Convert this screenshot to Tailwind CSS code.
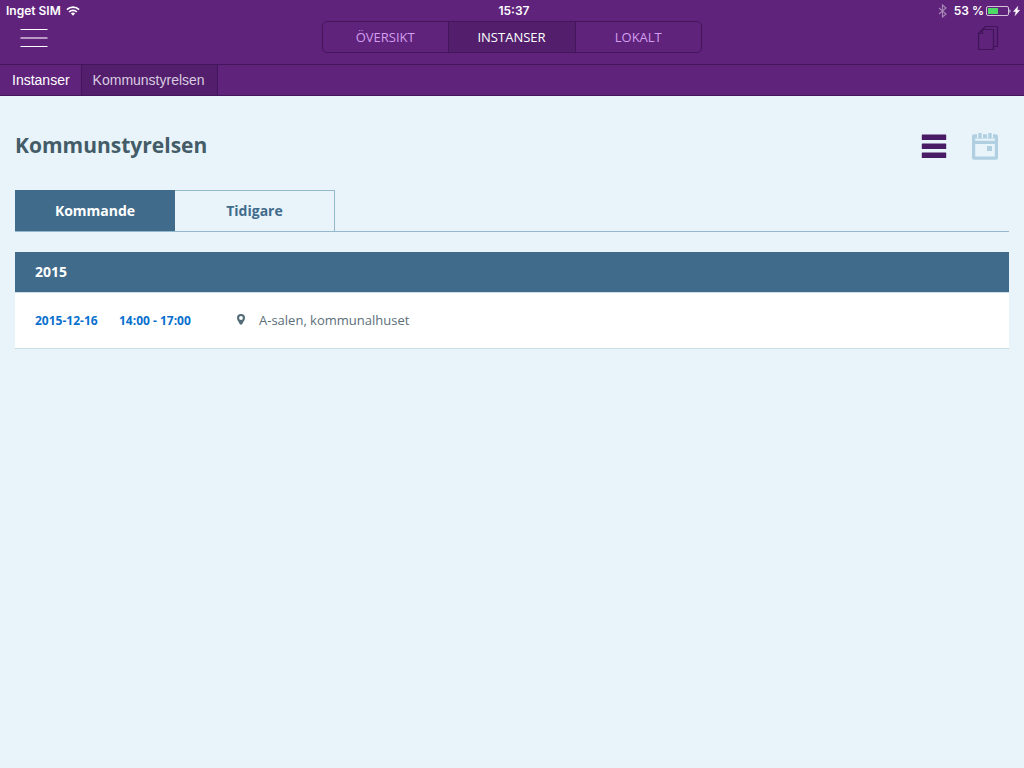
<!DOCTYPE html>
<html lang="sv">
<head>
<meta charset="utf-8">
<meta name="viewport" content="width=device-width, initial-scale=1">
<title>Kommunstyrelsen</title>
<script src="https://cdn.jsdelivr.net/npm/@tailwindcss/browser@4"></script>
</head>
<body class="min-h-screen bg-[#e8f4fa] font-['Open_Sans',sans-serif] text-[#435c68]">
<header class="bg-[#5f237c] text-white">
  <!-- Device status bar -->
  <div class="grid h-[21px] grid-cols-[1fr_auto_1fr] items-center px-[6px] font-['Inter',sans-serif] text-[12px] font-semibold">
    <div class="flex items-center gap-[5px]">
      <span>Inget SIM</span>
      <svg class="h-[10px] w-[14px]" viewBox="0 0 14 10" fill="none" stroke="currentColor" stroke-width="1.7" aria-hidden="true">
        <path d="M.9 3.6a8.8 8.8 0 0 1 12.2 0M3.1 6a5.6 5.6 0 0 1 7.8 0"/>
        <path d="M7 9.7 4.9 7.6a3 3 0 0 1 4.200 0z" fill="currentColor" stroke="none"/>
      </svg>
    </div>
    <span class="pl-1">15:37</span>
    <div class="-mr-[2px] flex items-center justify-end">
      <svg class="mr-[7px] h-[14px] w-[9px] text-[#a585b5]" viewBox="0 0 9 14" fill="none" stroke="currentColor" stroke-width="1.200" aria-hidden="true"><path d="M1 4l7 6-3.500 3V1L8 4 1 10"/></svg>
      <span class="mr-[2px]">53 %</span>
      <svg class="h-[10px] w-[25px]" viewBox="0 0 25 10" fill="none" aria-hidden="true">
        <rect x=".5" y=".5" width="22" height="9" rx="1.500" stroke="#d3c1dc"/>
        <rect x="2" y="2" width="10" height="6" fill="#4cd964"/>
        <path d="M23.500 3.200c1.300.4 1.300 3.200 0 3.600z" fill="#fff"/>
      </svg>
      <svg class="ml-[2px] h-[10px] w-[7px]" viewBox="0 0 7 10" fill="currentColor" stroke="currentColor" stroke-width=".5" aria-hidden="true"><path d="M4.800.4.500 5.600h2.500L2.100 9.600l4.500-5.400H4.100z"/></svg>
    </div>
  </div>
  <div class="grid h-11 grid-cols-[1fr_380px_1fr] items-start border-b border-[#43165c] px-5">
    <button type="button" aria-label="Meny" class="mt-[7px] w-7">
      <svg class="h-5 w-7" viewBox="0 0 28 20" aria-hidden="true"><path fill="#fff" d="M.5 1h27v1H.5zM.5 18h27v1H.5z"/><path fill="#ba99c6" d="M.5 9h27v2H.5z"/></svg>
    </button>
    <nav aria-label="Vy" class="grid h-8 grid-cols-[1fr_127px_1fr] divide-x divide-[#43165c] overflow-hidden rounded-[5px] border border-[#43165c] text-[13px] text-[#d39eee]">
      <button type="button" class="pt-px">ÖVERSIKT</button>
      <button type="button" aria-pressed="true" class="bg-[#531f6c] pt-px text-white">INSTANSER</button>
      <button type="button" class="pt-px">LOKALT</button>
    </nav>
    <button type="button" aria-label="Dokument" class="mt-1 mr-[5px] justify-self-end">
      <svg class="h-[26px] w-[22px]" viewBox="0 0 22 26" fill="none" stroke="#401557" stroke-width="1.200" stroke-linejoin="round" aria-hidden="true">
        <path d="M5.500 4.500h11v20h-15v-16zv4h-4"/>
        <path d="M5.500 4.500l3-3h12v20h-4"/>
      </svg>
    </button>
  </div>
  <nav aria-label="Brödsmulor" class="flex h-[31px] border-b border-[#43165c] font-['Liberation_Sans',sans-serif] text-[14px]">
    <a href="#" class="flex items-center border-r border-[#43165c] pr-[11px] pl-3">Instanser</a>
    <a href="#" aria-current="page" class="flex items-center border-r border-[#43165c] bg-[#531f6c] pr-3 pl-[11px] text-[#d9cbe1]">Kommunstyrelsen</a>
  </nav>
</header>

<main class="px-[15px] pt-[30px]">
  <div class="flex h-10 items-center justify-between">
    <h1 class="text-[21px] font-bold">Kommunstyrelsen</h1>
    <div class="flex items-center gap-[25px] pr-[11px]">
      <button type="button" aria-label="Lista">
        <svg class="h-[28px] w-[26px]" viewBox="0 0 26 28" fill="#481b64" aria-hidden="true"><rect x=".8" y="2.400" width="24.400" height="5.600" rx=".6"/><rect x=".8" y="11.400" width="24.400" height="5.600" rx=".6"/><rect x=".8" y="20.400" width="24.400" height="5.600" rx=".6"/></svg>
      </button>
      <button type="button" aria-label="Kalender">
        <svg class="h-[28px] w-[26px]" viewBox="0 0 26 28" fill="#b0d0e1" aria-hidden="true">
          <path fill-rule="evenodd" d="M2 2.300h3V6h16V2.300h3a2 2 0 0 1 2 2v21.400a2 2 0 0 1-2 2H2a2 2 0 0 1-2-2V4.300a2 2 0 0 1 2-2zM3.200 6.500v2.200h19.600V6.500zM3.200 12v12.500h19.600V12z"/>
          <path d="M6.300 1h3.400v5.500H6.300zM16.300 1h3.400v5.500h-3.400zM11 2.300h4v3.600h-4zM15 14h5v5h-5z"/>
        </svg>
      </button>
    </div>
  </div>

  <div role="tablist" class="mt-6 flex h-[42px] border-b border-[#94b9cc] text-[14px] font-bold">
    <button type="button" role="tab" aria-selected="true" class="w-40 bg-[#416b8b] text-white">Kommande</button>
    <button type="button" role="tab" aria-selected="false" class="w-40 border-t border-r border-[#94b9cc] pb-px text-[#416b8b]">Tidigare</button>
  </div>

  <table class="mt-5 w-full table-fixed text-left">
    <colgroup><col class="w-[104px]"><col class="w-[118px]"><col></colgroup>
    <thead>
      <tr class="h-10 bg-[#416b8b] text-[14px] text-white"><th colspan="3" class="pl-5 font-bold">2015</th></tr>
    </thead>
    <tbody>
      <tr class="h-14 border-y border-[#cbdde6] bg-white text-[12px]">
        <td class="pt-[2px] pl-5 font-bold text-[#0870ce]"><a href="#">2015-12-16</a></td>
        <td class="pt-[2px] font-bold text-[#0870ce]"><a href="#">14:00 - 17:00</a></td>
        <td class="pt-[2px] text-[13px] text-[#5b6f79]">
          <div class="flex items-center gap-[14px]">
            <svg class="mb-[3px] h-[11px] w-2" viewBox="0 0 8 11" fill="#526b76" aria-hidden="true"><path fill-rule="evenodd" d="M4 0a4 4 0 0 0-4 4c0 2 1.300 3 2.700 6q1.300 1.600 2.600 0C6.700 7 8 6 8 4a4 4 0 0 0-4-4zm0 2.100a1.900 1.900 0 1 1 0 3.800 1.900 1.900 0 0 1 0-3.800z"/></svg>
            <span>A-salen, kommunalhuset</span>
          </div>
        </td>
      </tr>
    </tbody>
  </table>
</main>
</body>
</html>
